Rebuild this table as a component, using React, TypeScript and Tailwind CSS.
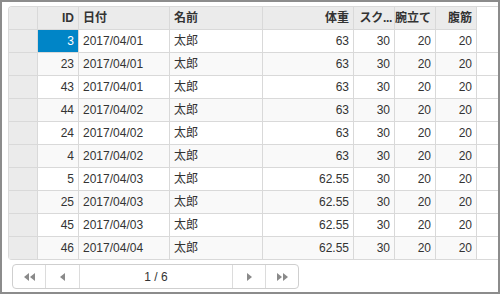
import React from "react";

type Row = {
  id: number;
  date: string;
  name: string;
  weight: string;
  squat: number;
  pushup: number;
  situp: number;
};

const rows: Row[] = [
  { id: 3, date: "2017/04/01", name: "太郎", weight: "63", squat: 30, pushup: 20, situp: 20 },
  { id: 23, date: "2017/04/01", name: "太郎", weight: "63", squat: 30, pushup: 20, situp: 20 },
  { id: 43, date: "2017/04/01", name: "太郎", weight: "63", squat: 30, pushup: 20, situp: 20 },
  { id: 44, date: "2017/04/02", name: "太郎", weight: "63", squat: 30, pushup: 20, situp: 20 },
  { id: 24, date: "2017/04/02", name: "太郎", weight: "63", squat: 30, pushup: 20, situp: 20 },
  { id: 4, date: "2017/04/02", name: "太郎", weight: "63", squat: 30, pushup: 20, situp: 20 },
  { id: 5, date: "2017/04/03", name: "太郎", weight: "62.55", squat: 30, pushup: 20, situp: 20 },
  { id: 25, date: "2017/04/03", name: "太郎", weight: "62.55", squat: 30, pushup: 20, situp: 20 },
  { id: 45, date: "2017/04/03", name: "太郎", weight: "62.55", squat: 30, pushup: 20, situp: 20 },
  { id: 46, date: "2017/04/04", name: "太郎", weight: "62.55", squat: 30, pushup: 20, situp: 20 },
];

const cell = "h-[23px] shrink-0 border-r border-b border-[#d9d9d9] flex items-center px-[4px] overflow-hidden whitespace-nowrap";

function Tri({ dir, double }: { dir: "l" | "r"; double?: boolean }) {
  const one = dir === "l" ? "M5 0 L5 8 L0 4 Z" : "M0 0 L0 8 L5 4 Z";
  return (
    <svg width={double ? 11 : 5} height="8" viewBox={double ? "0 0 11 8" : "0 0 5 8"}>
      <path d={one} fill="#8a8a8a" />
      {double && <path d={one} transform="translate(6 0)" fill="#8a8a8a" />}
    </svg>
  );
}

export default function App() {
  return (
    <div
      className="w-[500px] h-[294px] border-2 border-[#8c8c8c] bg-white overflow-hidden text-[12px] text-[#333]"
      style={{ fontFamily: "'Liberation Sans', 'Noto Sans CJK JP', sans-serif" }}
    >
      <div className="ml-[6px] mt-[4px] w-[600px] border-t border-l border-[#d9d9d9] rounded-tl-[4px] rounded-bl-[4px] overflow-hidden">
        {/* header */}
        <div className="flex font-bold text-[#333]">
          <div className={`${cell} w-[29px] bg-[#ebebeb]`} />
          <div className={`${cell} w-[41px] bg-[#ebebeb] justify-end`}>ID</div>
          <div className={`${cell} w-[91px] bg-[#ebebeb]`}>日付</div>
          <div className={`${cell} w-[93px] bg-[#ebebeb]`}>名前</div>
          <div className={`${cell} w-[91px] bg-[#ebebeb] justify-end`}>体重</div>
          <div className={`${cell} w-[41px] bg-[#ebebeb] justify-end !px-[2px] tracking-[-0.3px]`}>スク...</div>
          <div className={`${cell} w-[41px] bg-[#ebebeb] justify-end`}>腕立て</div>
          <div className={`${cell} w-[41px] bg-[#ebebeb] justify-end`}>腹筋</div>
        </div>
        {rows.map((r, i) => {
          const bg = i % 2 === 1 ? "bg-[#f9f9f9]" : "bg-white";
          return (
            <div key={i} className="flex">
              <div className={`${cell} w-[29px] bg-[#ebebeb]`} />
              <div className={`${cell} w-[41px] justify-end ${i === 0 ? "bg-[#0085c7] text-white" : bg}`}>{r.id}</div>
              <div className={`${cell} w-[91px] ${bg}`}>{r.date}</div>
              <div className={`${cell} w-[93px] ${bg}`}>{r.name}</div>
              <div className={`${cell} w-[91px] justify-end ${bg}`}>{r.weight}</div>
              <div className={`${cell} w-[41px] justify-end ${bg}`}>{r.squat}</div>
              <div className={`${cell} w-[41px] justify-end ${bg}`}>{r.pushup}</div>
              <div className={`${cell} w-[41px] justify-end ${bg}`}>{r.situp}</div>
              <div className="h-[23px] flex-1 bg-white border-b border-[#d9d9d9]" />
            </div>
          );
        })}
      </div>
      <div className="ml-[10px] mt-[4px] w-[287px] h-[25px] flex border border-[#cfcfcf] rounded-[4px] bg-white">
        <div className="w-[33px] flex items-center justify-center border-r border-[#dcdcdc]">
          <Tri dir="l" double />
        </div>
        <div className="w-[34px] flex items-center justify-center border-r border-[#dcdcdc]">
          <Tri dir="l" />
        </div>
        <div className="w-[153px] flex items-center justify-center border-r border-[#dcdcdc]">1 / 6</div>
        <div className="w-[33px] flex items-center justify-center border-r border-[#dcdcdc]">
          <Tri dir="r" />
        </div>
        <div className="flex-1 flex items-center justify-center">
          <Tri dir="r" double />
        </div>
      </div>
    </div>
  );
}
